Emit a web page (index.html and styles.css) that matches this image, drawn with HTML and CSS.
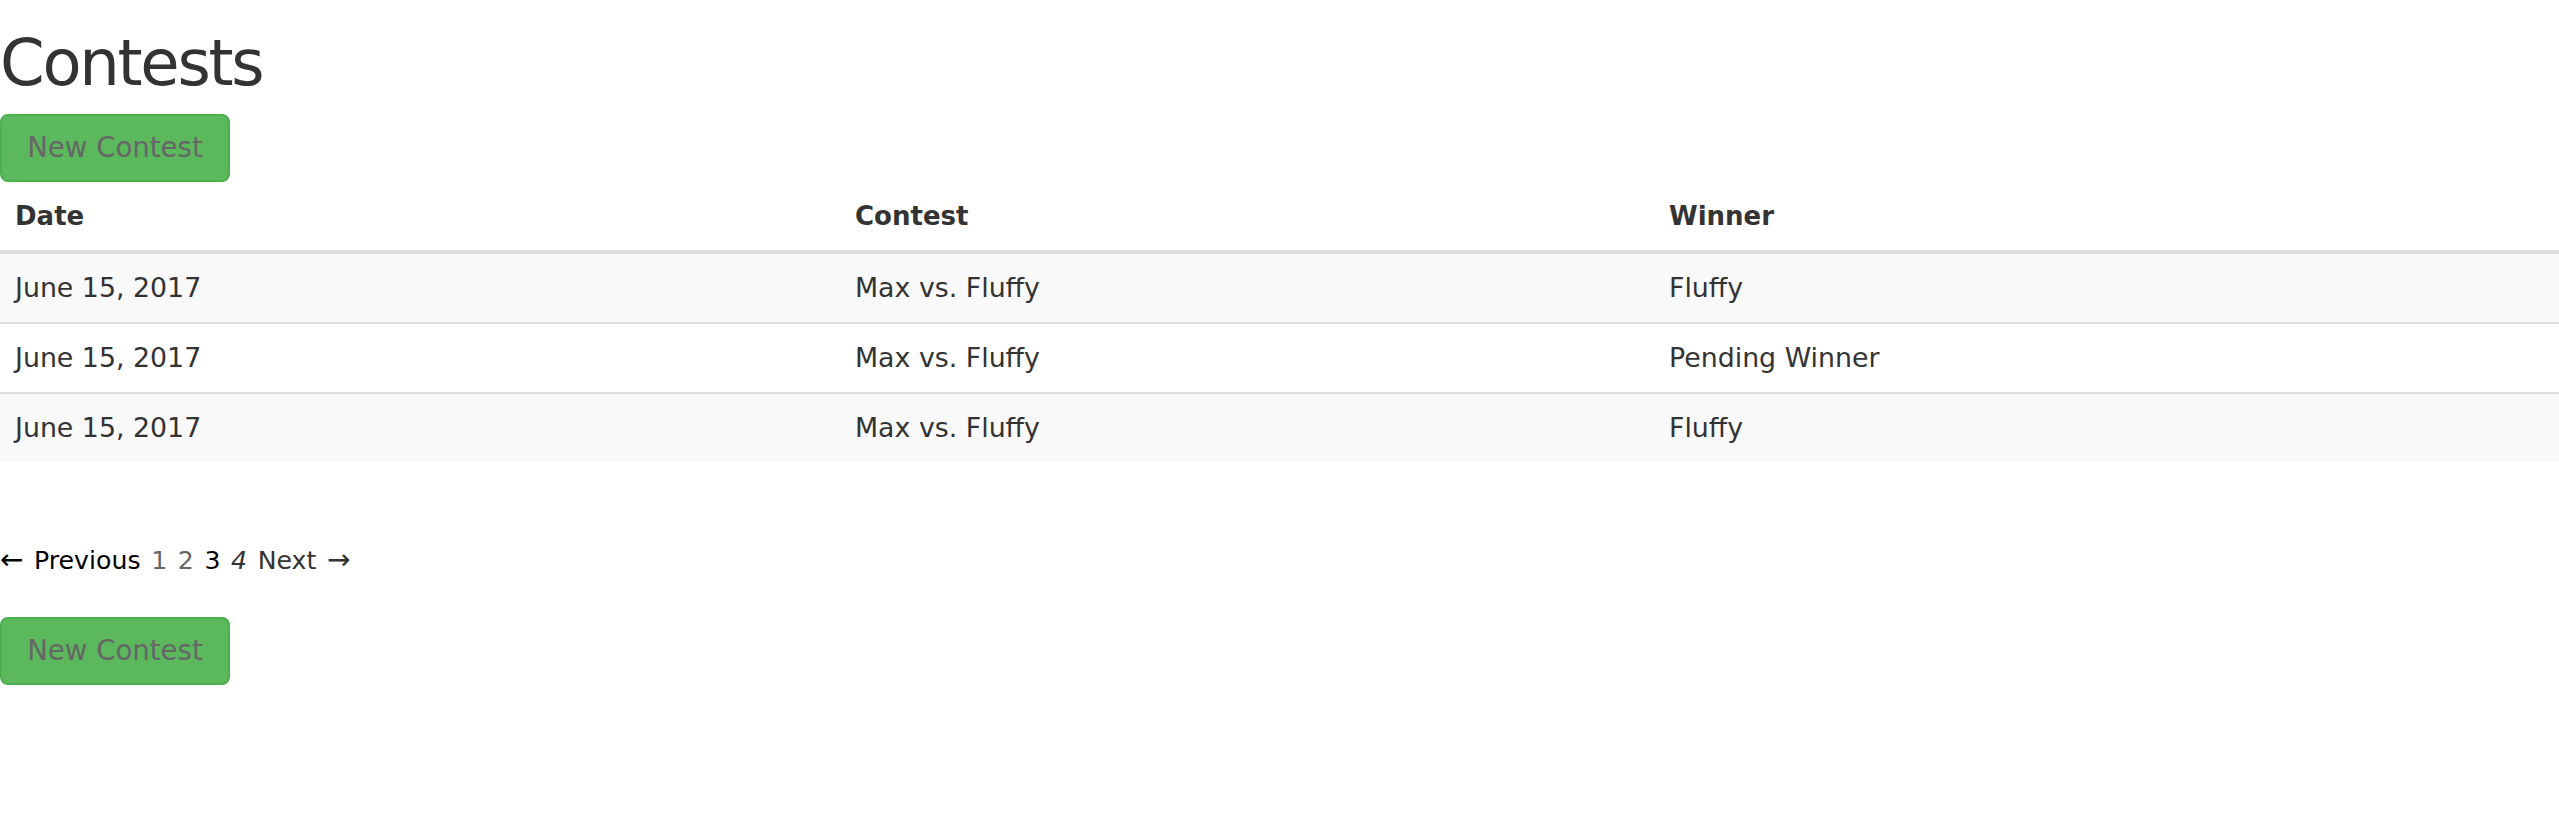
FILE: index.html
```html
<!DOCTYPE html>
<html>
<head>
<meta charset="utf-8">
<title>Contests</title>
<link rel="stylesheet" href="styles.css">
</head>
<body>
<div class="page">
  <h1 class="title">Contests</h1>
  <div class="actions"><a class="btn-new" href="#">New Contest</a></div>
  <table class="contests">
    <colgroup>
      <col class="col-date">
      <col class="col-contest">
      <col class="col-winner">
    </colgroup>
    <thead>
      <tr><th>Date</th><th>Contest</th><th>Winner</th></tr>
    </thead>
    <tbody>
      <tr class="odd"><td>June 15, 2017</td><td>Max vs. Fluffy</td><td>Fluffy</td></tr>
      <tr><td>June 15, 2017</td><td>Max vs. Fluffy</td><td>Pending Winner</td></tr>
      <tr class="odd"><td>June 15, 2017</td><td>Max vs. Fluffy</td><td>Fluffy</td></tr>
    </tbody>
  </table>
  <div class="pagination">
    <span class="prev"><span class="arrow">&larr;</span> Previous</span>
    <a class="pg" href="#">1</a>
    <a class="pg" href="#">2</a>
    <span class="cur">3</span>
    <em class="pg-em">4</em>
    <a class="next" href="#">Next <span class="arrow">&rarr;</span></a>
  </div>
  <div class="actions bottom"><a class="btn-new" href="#">New Contest</a></div>
</div>
</body>
</html>
```
FILE: styles.css
```css
html, body {
  margin: 0;
  padding: 0;
  background: #fff;
}
body {
  font-family: "DejaVu Sans", Verdana, sans-serif;
  color: #333;
  font-size: 27px;
}
.page {
  display: flex;
  flex-direction: column;
  align-items: stretch;
}
.title {
  margin: 28px 0 0 0;
  font-size: 64px;
  font-weight: normal;
  line-height: 70px;
  color: #333;
  letter-spacing: -2.3px;
}
.actions {
  margin-top: 16px;
  display: flex;
}
.btn-new {
  display: inline-block;
  box-sizing: border-box;
  width: 230px;
  height: 68px;
  line-height: 64px;
  text-align: center;
  background: #5cb85c;
  border: 2px solid #4cae4c;
  border-radius: 8px;
  color: #666;
  text-decoration: none;
  font-size: 27.6px;
}
.contests {
  width: 100%;
  border-collapse: separate;
  border-spacing: 0;
  table-layout: fixed;
}
.col-date { width: 840px; }
.col-contest { width: 814px; }
.contests th {
  text-align: left;
  font-weight: bold;
  padding: 16px 15px;
  line-height: 36px;
  border-bottom: 4px solid #ddd;
  font-size: 26px;
}
.contests td {
  padding: 16px 15px;
  line-height: 36px;
  font-size: 26.8px;
}
.contests tbody tr + tr td {
  border-top: 2px solid #ddd;
}
.contests tr.odd td {
  background: #f9f9f9;
}
.pagination {
  margin-top: 84px;
  height: 30px;
  font-size: 25.2px;
  line-height: 30px;
  word-spacing: 2.6px;
  color: #000;
}
.pagination .arrow {
  font-size: 28px;
  line-height: 20px;
}
.pagination a { text-decoration: none; }
.pg { color: #666; }
.cur { color: #000; }
.pg-em { color: #333; }
.next { color: #333; }
.actions.bottom {
  margin-top: 41px;
}
```
